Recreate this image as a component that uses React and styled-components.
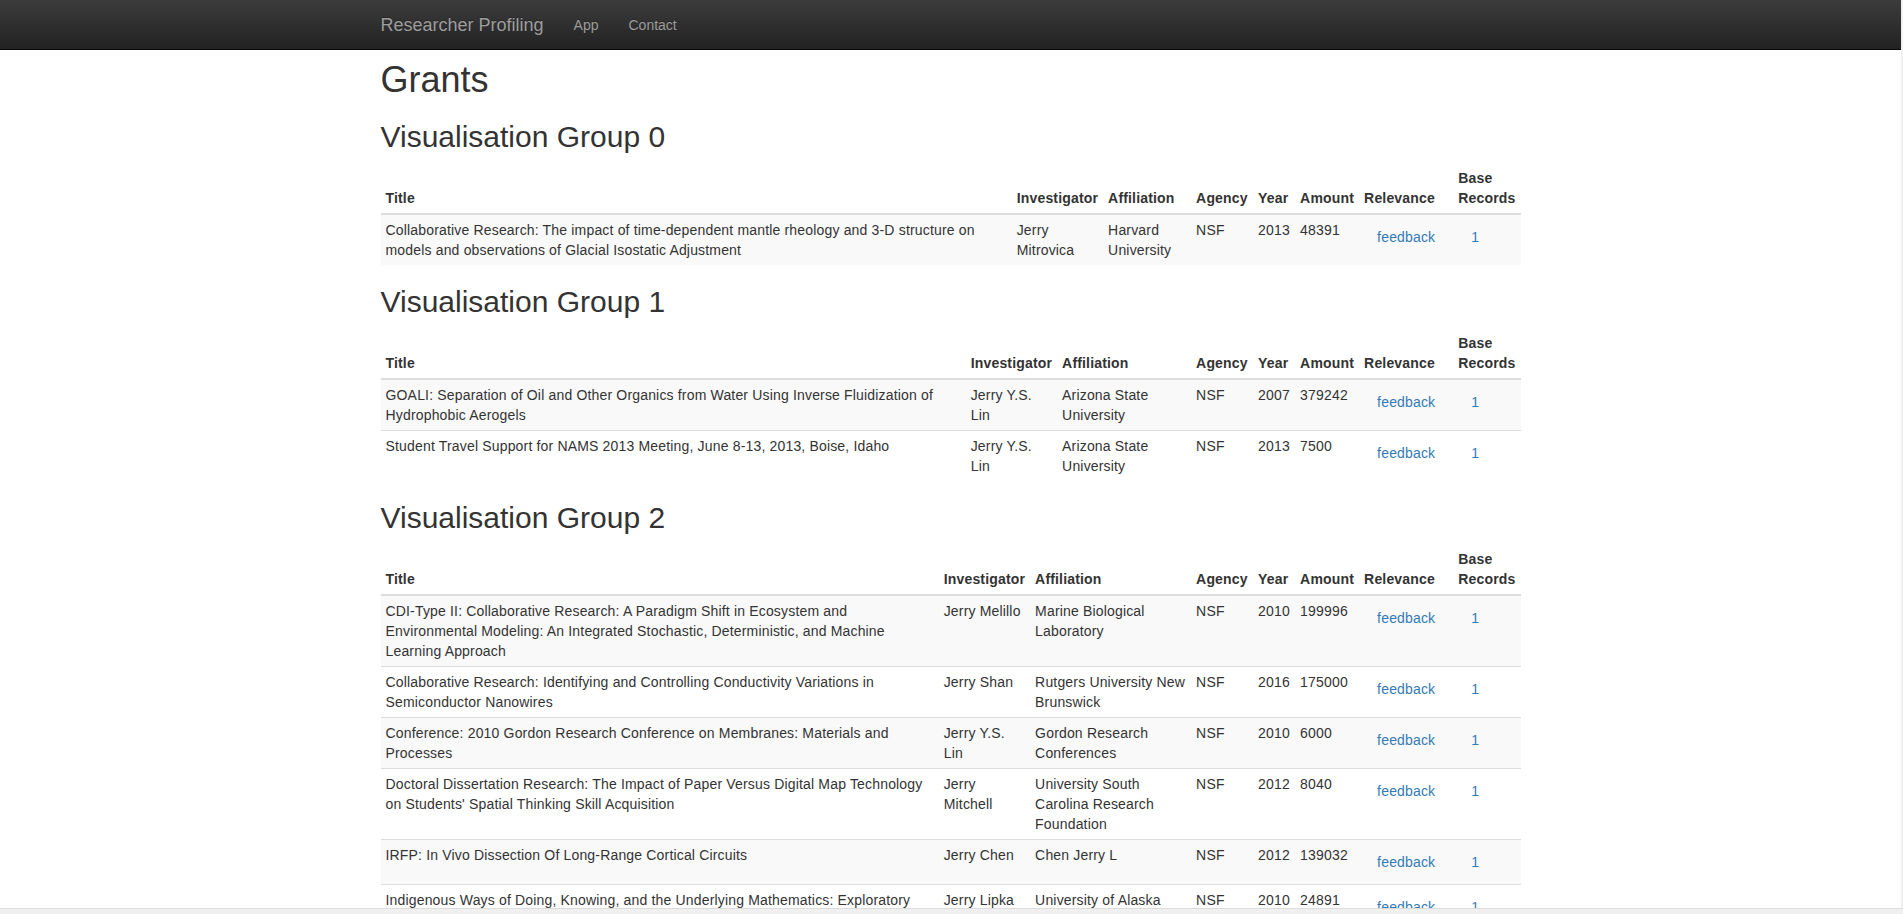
import React from 'react';
import styled, { createGlobalStyle } from 'styled-components';

const GlobalStyle = createGlobalStyle`
  html, body {
    margin: 0;
    padding: 0;
    overflow: hidden;
    background: #fff;
  }
  body {
    font-family: "Liberation Sans", Arial, Helvetica, sans-serif;
    font-size: 14px;
    line-height: 1.42857143;
    color: #333;
  }
  * { box-sizing: border-box; }
`;

const Page = styled.div`
  width: calc(100% - 2px);
`;

// Navbar

const Navbar = styled.nav`
  height: 50px;
  background-image: linear-gradient(to bottom, #3c3c3c 0, #222 100%);
  border-bottom: 1px solid #080808;
`;

const Container = styled.div`
  width: 1170px;
  margin: 0 auto;
  padding: 0 15px;
`;

const NavInner = styled(Container)`
  display: flex;
  align-items: center;
  height: 49px;
`;

const Brand = styled.a`
  font-size: 18px;
  line-height: 20px;
  padding: 15px;
  margin-left: -15px;
  color: #9d9d9d;
  text-decoration: none;
  text-shadow: 0 -1px 0 rgba(0, 0, 0, .25);
`;

const NavLink = styled.a`
  padding: 15px;
  line-height: 20px;
  color: #9d9d9d;
  text-decoration: none;
  text-shadow: 0 -1px 0 rgba(0, 0, 0, .25);
`;

// Headings

const Title = styled.h1`
  font-size: 36px;
  font-weight: 500;
  line-height: 1.1;
  margin: 10px 0 10px;
`;

const GroupTitle = styled.h2`
  font-size: 30px;
  font-weight: 500;
  line-height: 1.1;
  margin: 20px 0 10px;
`;

// Table

const Table = styled.table`
  width: 100%;
  border-collapse: collapse;
  border-spacing: 0;
  margin-bottom: 20px;
  letter-spacing: 0.17px;
`;

const Th = styled.th`
  text-align: left;
  vertical-align: bottom;
  padding: 5px;
  line-height: 20px;
  font-weight: bold;
  border-bottom: 2px solid #ddd;
  width: ${props => props.w ? `${props.w}px` : 'auto'};
`;

const Tr = styled.tr`
  &:nth-of-type(odd) { background-color: #f9f9f9; }
`;

const Td = styled.td`
  vertical-align: top;
  padding: 5px;
  line-height: 20px;
  border-top: 1px solid #ddd;
`;

const LinkButton = styled.a`
  display: inline-block;
  padding: 6px 12px;
  border: 1px solid transparent;
  line-height: 20px;
  color: #337ab7;
  text-decoration: none;
  cursor: pointer;
`;

const Strip = styled.div`
  position: fixed;
  background: #f0f0f0;
  ${props => props.bottom
    ? 'left: 0; right: 0; bottom: 0; height: 6px; border-top: 1px solid #dcdcdc;'
    : 'top: 0; right: 0; bottom: 0; width: 2px;'}
`;

const groups = [
  {
    affWidth: 88,
    rows: [
      ['Collaborative Research: The impact of time-dependent mantle rheology and 3-D structure on models and observations of Glacial Isostatic Adjustment', 'Jerry Mitrovica', 'Harvard University', '2013', '48391'],
    ],
  },
  {
    affWidth: 134,
    rows: [
      ['GOALI: Separation of Oil and Other Organics from Water Using Inverse Fluidization of Hydrophobic Aerogels', 'Jerry Y.S. Lin', 'Arizona State University', '2007', '379242'],
      ['Student Travel Support for NAMS 2013 Meeting, June 8-13, 2013, Boise, Idaho', 'Jerry Y.S. Lin', 'Arizona State University', '2013', '7500'],
    ],
  },
  {
    affWidth: 161,
    rows: [
      ['CDI-Type II: Collaborative Research: A Paradigm Shift in Ecosystem and Environmental Modeling: An Integrated Stochastic, Deterministic, and Machine Learning Approach', 'Jerry Melillo', 'Marine Biological Laboratory', '2010', '199996'],
      ['Collaborative Research: Identifying and Controlling Conductivity Variations in Semiconductor Nanowires', 'Jerry Shan', 'Rutgers University New Brunswick', '2016', '175000'],
      ['Conference: 2010 Gordon Research Conference on Membranes: Materials and Processes', 'Jerry Y.S. Lin', 'Gordon Research Conferences', '2010', '6000'],
      ['Doctoral Dissertation Research: The Impact of Paper Versus Digital Map Technology on Students\' Spatial Thinking Skill Acquisition', 'Jerry Mitchell', 'University South Carolina Research Foundation', '2012', '8040'],
      ['IRFP: In Vivo Dissection Of Long-Range Cortical Circuits', 'Jerry Chen', 'Chen Jerry L', '2012', '139032'],
      ['Indigenous Ways of Doing, Knowing, and the Underlying Mathematics: Exploratory Research', 'Jerry Lipka', 'University of Alaska Fairbanks Campus', '2010', '24891'],
    ],
  },
];

const GrantTable = ({ rows, affWidth }) => (
  <Table>
    <thead>
      <tr>
        <Th>Title</Th>
        <Th w={91}>Investigator</Th>
        <Th w={affWidth}>Affiliation</Th>
        <Th w={62}>Agency</Th>
        <Th w={42}>Year</Th>
        <Th w={64}>Amount</Th>
        <Th w={94}>Relevance</Th>
        <Th w={66}>Base Records</Th>
      </tr>
    </thead>
    <tbody>
      {rows.map(([title, inv, aff, year, amount], i) => (
        <Tr key={i}>
          <Td>{title}</Td>
          <Td>{inv}</Td>
          <Td>{aff}</Td>
          <Td>NSF</Td>
          <Td>{year}</Td>
          <Td>{amount}</Td>
          <Td><LinkButton>feedback</LinkButton></Td>
          <Td><LinkButton>1</LinkButton></Td>
        </Tr>
      ))}
    </tbody>
  </Table>
);

const App = () => (
  <Page>
    <GlobalStyle />
    <Navbar>
      <NavInner>
        <Brand>Researcher Profiling</Brand>
        <NavLink>App</NavLink>
        <NavLink>Contact</NavLink>
      </NavInner>
    </Navbar>
    <Container>
      <Title>Grants</Title>
      {groups.map((group, i) => (
        <React.Fragment key={i}>
          <GroupTitle>Visualisation Group {i}</GroupTitle>
          <GrantTable rows={group.rows} affWidth={group.affWidth} />
        </React.Fragment>
      ))}
    </Container>
    <Strip />
    <Strip bottom />
  </Page>
);

export default App;
